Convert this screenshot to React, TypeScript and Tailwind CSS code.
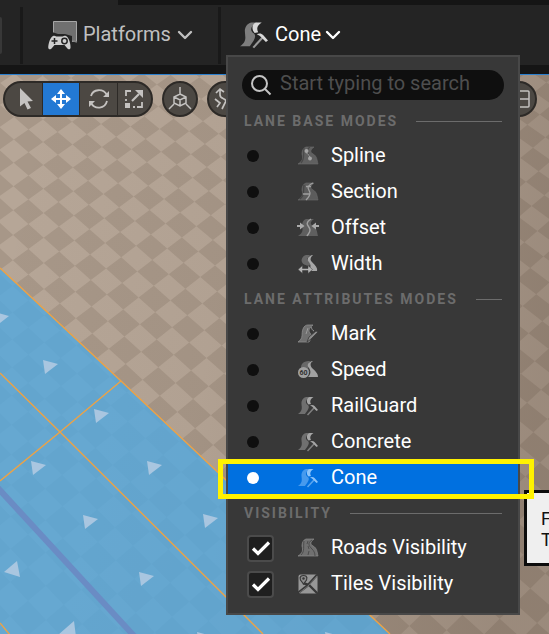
import type { ReactNode } from "react";

/* ---------- viewport scene ---------- */

// Perspective mapping of the ground grid (column, row) to scene coordinates.
function ground(col: number, row: number): string {
  const u = col / 6;
  const v = row / 11;
  const w = 1 - 0.0111 * u - 0.1201 * v;
  const x = (14 + 173.9 * u - 3.7 * v) / w;
  const y = (128.3 + 12.8 * u + 232.5 * v) / w;
  return `${x.toFixed(1)} ${(y - 75).toFixed(1)}`;
}

function tilePath(): string {
  const parts: string[] = [];
  for (let c = -1; c < 20; c++) {
    for (let r = -6; r < 19; r++) {
      parts.push(
        `M${ground(c - 0.5, r)}L${ground(c, r - 0.5)}L${ground(c + 0.5, r)}L${ground(c, r + 0.5)}Z`,
      );
    }
  }
  return parts.join("");
}

const arrows = [
  [-6, 312],
  [43, 360],
  [94, 409],
  [31, 461],
  [147, 461],
  [83, 515],
  [203, 514],
  [139, 572],
  [197, 632],
  [325, 632],
];

function Scene() {
  return (
    <svg
      className="absolute inset-0 h-full w-full"
      viewBox="0 0 549 559"
      preserveAspectRatio="xMinYMin slice"
      aria-hidden="true"
    >
      <defs>
        <linearGradient id="shade" x1="0" y1="0.3" x2="1" y2="0.5">
          <stop offset="0" stopColor="#3a281c" stopOpacity="0" />
          <stop offset="0.4" stopColor="#3a281c" stopOpacity="0.04" />
          <stop offset="1" stopColor="#3a281c" stopOpacity="0.22" />
        </linearGradient>
      </defs>
      <rect width="549" height="559" fill="#a79788" />
      <path d={tilePath()} fill="#b6a697" />
      <rect width="549" height="559" fill="url(#shade)" />
      <g transform="translate(0 -75)">
        <path d="M0 268L121 381L226 480L390 634H0Z" fill="#52a9e0" fillOpacity="0.8" />
        <path d="M-3 487L135 637" stroke="#6a8cc4" strokeWidth="6" />
        <g fill="none" stroke="#eda245" strokeWidth="1.4">
          <path d="M0 268L121 381L226 480L390 634" />
          <path d="M0 373L60 432L226 597L263 634" />
          <path d="M121 381L60 432L0 481" />
          <path d="M0 623L10 635" />
        </g>
        <g fill="#a9c6e0">
          {arrows.map(([x, y]) => (
            <path key={`${x}-${y}`} d={`M${x} ${y}l15 4l-13 10z`} />
          ))}
          <path d="M4 572L17 561L20 577Z" />
          <path d="M58 635L74 621L76 637Z" />
        </g>
      </g>
    </svg>
  );
}

/* ---------- icons ---------- */

function Chevron() {
  return (
    <svg width="16" height="10" viewBox="0 0 16 10" fill="none" stroke="currentColor" strokeWidth="2.4" strokeLinecap="round" strokeLinejoin="round" aria-hidden="true">
      <path d="M2 2L8 8L14 2" />
    </svg>
  );
}

function PlatformsIcon() {
  return (
    <svg width="30" height="30" viewBox="0 0 30 30" aria-hidden="true">
      <path d="M5.5 1.5H28.500V21.500H5.500Z" fill="#707070" stroke="#a6a6a6" />
      <path d="M4 12L10 14L17 14L24 16V24H30V30H0V24Z" fill="#242424" />
      <path d="M24 20.500L29 22" stroke="#808080" strokeWidth="1.500" />
      <path d="M5 16C7 15 8 16.500 9 16.500H14C15 16.500 16 15 18 16C21 17 23 25 22.500 28C22 30 20 29.500 19 28L16.500 25H6.500L4 28C3 29.500 .8 30 .3 28C0 25 2 17 5 16Z" fill="#cfcfcf" />
      <path d="M6.500 18V24M3.500 21H9.500" stroke="#242424" strokeWidth="1.500" />
      <circle cx="16.500" cy="21" r="2.700" fill="none" stroke="#242424" strokeWidth="1.500" />
    </svg>
  );
}

const wideRoad = "M0 18C5 15 5 12 4 8C4 5 5 2 8 1H16C12 4 12 6 15 8C19 10 19 14 20 18Z";
const bendRoad = "M0 18C6 14 3 10 5 5C6 2 8 1 10 1H15C11 4 10 7 12 9C14 12 13 15 11 18Z";

type RoadKind = "spline" | "section" | "offset" | "width" | "mark" | "speed" | "hammer" | "roads" | "tiles";

function HammerRoad() {
  return (
    <>
      <path d="M0 18C6 14 3 10 3.500 6C4.500 2 7 1 9 1H12C7 4 7 7 10 9C12 11 10 14 7 18Z" fill="currentColor" opacity="0.5" />
      <path d="M15.500 1C12.500 3 11.500 5 13 8L10.500 8.500C8 6 8.500 2 11.500 1Z" fill="currentColor" />
      <path d="M9.500 19L16 12" stroke="currentColor" strokeWidth="1.500" opacity="0.65" />
      <path d="M12 9.500C13.500 8.500 15.500 8.800 16.500 10L20 14L18.500 15L15.500 12L14 10.500Z" fill="currentColor" />
    </>
  );
}

const drawings: Record<RoadKind, ReactNode> = {
  spline: (
    <>
      <path d={wideRoad} fill="#606060" stroke="#6c6c6c" strokeWidth="0.600" />
      <path d="M6 2C5 10 7 13 3 17M12 1C7 4 11 10 14 14" fill="none" stroke="#494949" strokeWidth="1.200" />
      <path d="M8.500 5C8 9 12 8 12 12" fill="none" stroke="#a5a5a5" />
      <circle cx="8.500" cy="5" r="2" fill="#a5a5a5" />
      <circle cx="12" cy="12.500" r="2" fill="#a5a5a5" />
    </>
  ),
  section: (
    <>
      <path d={wideRoad} fill="#5c5c5c" stroke="#6c6c6c" strokeWidth="0.600" />
      <path d="M6 3C5 10 7 13 2 17" fill="none" stroke="#454545" strokeWidth="1.200" />
      <path d="M15 1C6 5 12 8 12 11C12 14 10 16 8 18M8 4.500H13M5 12H12" fill="none" stroke="#a0a0a0" strokeWidth="1.300" />
    </>
  ),
  offset: (
    <>
      <path d={wideRoad} fill="#5f5f5f" />
      <path d="M13 1C5 6 12 8 12 12C12 15 10 16 9 18" fill="none" stroke="#a0a0a0" strokeWidth="1.400" />
      <path d="M-1 7H2V4.500L6.500 8L2 11.500V9H-1ZM21 7H18V4.500L13.500 8L18 11.500V9H21Z" fill="#aaaaaa" />
    </>
  ),
  width: (
    <>
      <path d="M8 1C4 2 3 6 4 8C5 11 8 11 11 12L13 9L9 5L12 1Z" fill="#676767" />
      <path d="M14 1C9 3 9 6 11 8C13 11 13 13 11 16L14 17H19C20 14 17 11 14 8C12 6 12 4 15 1Z" fill="#a7a7a7" />
      <path d="M0 15.500L4.500 11.500V14.500H10V11.500L14.500 15.500L10 19.500V16.500H4.500V19.500Z" fill="#b4b4b4" stroke="#383838" strokeWidth="0.500" />
    </>
  ),
  mark: (
    <>
      <path d={bendRoad} fill="#707070" stroke="#8e8e8e" strokeWidth="0.800" />
      <path d="M13 3C14 5 14 6 16 7M10 4L8 10" stroke="#9a9a9a" fill="none" />
      <path d="M9 18L11 13L18 7L20 8L13 15Z" fill="#8b8b8b" stroke="#383838" strokeWidth="0.800" />
    </>
  ),
  speed: (
    <>
      <path d="M10 1C4 2 3 5 3 8L9 9L12 13L10 8L12 1Z" fill="#686868" />
      <path d="M14 1C9 3 9 6 11 8C13 11 13 14 10 17H20C20 13 17 11 14 8C12 5 12 3 15 1Z" fill="#a2a2a2" />
      <circle cx="5.500" cy="12.500" r="5.500" fill="#a0a0a0" />
      <text x="5.500" y="15" textAnchor="middle" fontSize="7" fontWeight="700" fontFamily="Roboto, sans-serif" fill="#303030">60</text>
    </>
  ),
  hammer: <HammerRoad />,
  roads: (
    <>
      <path d={wideRoad} fill="#707070" stroke="#8a8a8a" strokeWidth="0.700" />
      <path d="M6 3C5 9 7 13 3 17M14 2C9 5 11 8 14 11C16 13 17 15 17 18" fill="none" stroke="#484848" strokeWidth="0.900" />
      <path d="M10 3L9 6M10 8L11 11M11 13L10 17" stroke="#484848" strokeWidth="0.900" />
    </>
  ),
  tiles: (
    <>
      <rect x="0.500" y="0.500" width="19" height="19" rx="2" fill="#979797" />
      <path d="M0 19L9 12L19 1M5 9L11 11L19 19" fill="none" stroke="#383838" strokeWidth="2.400" />
      <path d="M1 19L10 12L19 2" fill="none" stroke="#979797" strokeWidth="0.600" />
      <path d="M5.500 10L2.500 6C1 2 4 1.500 5.500 1.500C7 1.500 10 2 8.500 6Z" fill="#8c8c8c" stroke="#383838" strokeWidth="1.200" />
      <circle cx="5.500" cy="4.500" r="1.200" fill="#383838" />
    </>
  ),
};

function RoadIcon({ kind, className }: { kind: RoadKind; className: string }) {
  return (
    <svg className={`shrink-0 overflow-visible ${className}`} viewBox="0 0 20 20" aria-hidden="true">
      {drawings[kind]}
    </svg>
  );
}

/* ---------- menu ---------- */

function SectionTitle({ children }: { children: string }) {
  return (
    <div className="flex h-[34px] items-center gap-[18px] px-4">
      <h2 className="text-sm font-bold tracking-[2px] whitespace-nowrap text-[#6c6c6c]">{children}</h2>
      <span className="h-px flex-1 bg-[#6c6c6c]" />
    </div>
  );
}

function ModeItem({ label, kind, selected = false }: { label: string; kind: RoadKind; selected?: boolean }) {
  return (
    <label
      className={`flex h-9 items-center pl-[19px] text-xl ${selected ? "bg-[#0070e0] text-[#8dc4fa]" : "text-[#a6a6a6]"}`}
    >
      <span className="flex w-[51px] items-center">
        <input
          type="radio"
          name="mode"
          defaultChecked={selected}
          className="h-3 w-3 appearance-none rounded-full bg-[#0f0f0f] checked:bg-white"
        />
      </span>
      <RoadIcon kind={kind} className="h-5 w-5" />
      <span className="pb-0.5 pl-[13px] text-white">{label}</span>
    </label>
  );
}

function VisibilityItem({ label, kind }: { label: string; kind: RoadKind }) {
  return (
    <label className="flex h-9 items-center pl-[19px] text-xl text-white">
      <span className="grid w-[51px] items-center">
        <input
          type="checkbox"
          defaultChecked
          className="col-start-1 row-start-1 h-[27px] w-[27px] appearance-none rounded border-2 border-[#4b4b4b] bg-[#1f1f1f]"
        />
        <svg className="pointer-events-none col-start-1 row-start-1 ml-1" width="20" height="20" viewBox="0 0 20 20" fill="none" stroke="#ffffff" strokeWidth="3.200" aria-hidden="true">
          <path d="M2 10.500L7 15.500L18 4.500" />
        </svg>
      </span>
      <RoadIcon kind={kind} className="h-5 w-5" />
      <span className="pb-0.5 pl-[13px]">{label}</span>
    </label>
  );
}

function ModeMenu() {
  return (
    <div className="absolute top-[55px] left-[226px] w-[294px] border-2 border-[#484848] bg-[#383838] pb-[11px]">
      <div className="mx-[14px] mt-[13px] mb-1 flex h-[30px] items-center rounded-full bg-[#0f0f0f] pl-2">
        <svg className="shrink-0" width="22" height="22" viewBox="0 0 22 22" fill="none" stroke="#c4c4c4" strokeWidth="2" aria-hidden="true">
          <circle cx="9.500" cy="9.500" r="7.500" />
          <path d="M15 15L20.500 20.500" />
        </svg>
        <input
          type="text"
          aria-label="Search modes"
          placeholder="Start typing to search"
          className="ml-2 h-[26px] w-full min-w-0 bg-transparent pb-1 text-xl text-white outline-none placeholder:text-[#4e4e4e]"
        />
      </div>
      <SectionTitle>LANE BASE MODES</SectionTitle>
      <ModeItem label="Spline" kind="spline" />
      <ModeItem label="Section" kind="section" />
      <ModeItem label="Offset" kind="offset" />
      <ModeItem label="Width" kind="width" />
      <SectionTitle>LANE ATTRIBUTES MODES</SectionTitle>
      <ModeItem label="Mark" kind="mark" />
      <ModeItem label="Speed" kind="speed" />
      <ModeItem label="RailGuard" kind="hammer" />
      <ModeItem label="Concrete" kind="hammer" />
      <ModeItem label="Cone" kind="hammer" selected />
      <SectionTitle>VISIBILITY</SectionTitle>
      <VisibilityItem label="Roads Visibility" kind="roads" />
      <VisibilityItem label="Tiles Visibility" kind="tiles" />
    </div>
  );
}

/* ---------- viewport tools ---------- */

const pill = "flex h-9 shrink-0 overflow-hidden border-2 border-[#2d2a27] bg-[#4c4843] text-[#c4c2c0]";

function ViewportTools() {
  return (
    <div className="relative flex gap-[9px] pt-[6px] pr-3 pl-[3px]">
      <div className={`${pill} w-[150px] divide-x divide-[#2d2a27] rounded-full`}>
        <button type="button" aria-label="Select" className="flex w-[38px] items-center justify-end pr-2">
          <svg width="15" height="22" viewBox="0 0 15 22" fill="currentColor">
            <path d="M1 0L14 13L8.500 13.500L12 20L8.500 21.500L5.500 15L1 18.500Z" />
          </svg>
        </button>
        <button type="button" aria-label="Move" className="flex w-[37px] items-center justify-center bg-[#2379d4] text-white">
          <svg width="20" height="20" viewBox="0 0 20 20" fill="currentColor">
            <path d="M10 0L14 5H11V9H15V6L20 10L15 14V11H11V15H14L10 20L6 15H9V11H5V14L0 10L5 6V9H9V5H6Z" />
          </svg>
        </button>
        <button type="button" aria-label="Rotate" className="flex w-[38px] items-center justify-center">
          <svg width="22" height="20" viewBox="0 0 22 20" fill="none" stroke="currentColor" strokeWidth="1.800">
            <path d="M3 7C5 0 15 -1 19 6M19 12C17 20 7 21 3 14" />
            <path d="M21 2V8H15ZM1 18V12H7Z" fill="currentColor" stroke="none" />
          </svg>
        </button>
        <button type="button" aria-label="Scale" className="flex flex-1 items-center justify-center pr-0.5">
          <svg width="18" height="18" viewBox="0 0 18 18" fill="none" stroke="currentColor" strokeWidth="1.800">
            <path d="M1 6V1H6M17 12V17H12M1 9V11M8 17H10" />
            <path d="M7 11L14 4" strokeWidth="2.200" />
            <path d="M10 0H18V8ZM0 13H5V18H0Z" fill="currentColor" stroke="none" />
          </svg>
        </button>
      </div>
      <button type="button" aria-label="Coordinate system" className={`${pill} w-9 items-center justify-center rounded-full`}>
        <svg className="shrink-0" width="24" height="26" viewBox="0 0 24 26" fill="none" stroke="currentColor" strokeWidth="1.500">
          <path d="M12 1V8M12 8L18 11V17L12 20L6 17V11ZM6 11L12 14L18 11M12 14V20M6 18L1 23M18 18L23 23" />
        </svg>
      </button>
      <button type="button" aria-label="Surface snapping" className={`${pill} w-[60px] items-center rounded-full pl-[5px]`}>
        <svg width="24" height="24" viewBox="0 0 24 24" fill="none" stroke="currentColor" strokeWidth="1.700">
          <path d="M6 2V8C6 12 11 11 12 14L8 22M2 6L6 2L10 5M12 14C14 14 15 11 20 9M1 12L6 16L3 20" />
        </svg>
      </button>
      <button type="button" aria-label="Layout" className={`${pill} ml-auto w-[60px] items-center justify-end rounded-full pr-[5px]`}>
        <svg width="18" height="18" viewBox="0 0 18 18" fill="none" stroke="currentColor" strokeWidth="1.500">
          <rect x="1" y="1" width="16" height="16" rx="1" />
          <path d="M1 9H17" />
        </svg>
      </button>
    </div>
  );
}

export default function App() {
  return (
    <div className="relative flex min-h-screen flex-col overflow-hidden bg-[#151515] font-['Roboto',sans-serif]">
      <div className="flex h-[5px]">
        <div className="w-[118px] bg-[#242424]" />
      </div>
      <header className="flex h-[60px] items-center bg-[#242424] text-xl">
        <div className="h-[37px] w-[2px] rounded-r bg-[#383838]" />
        <div className="ml-[18px] h-[57px] w-[3px] bg-[#191919]" />
        <button type="button" className="flex w-[195px] items-center pl-[25px] text-[#c0c0c0]">
          <PlatformsIcon />
          <span className="pr-[6px] pb-0.5 pl-[5px]">Platforms</span>
          <Chevron />
        </button>
        <div className="h-[57px] w-[3px] bg-[#191919]" />
        <button type="button" className="flex items-center pl-[19px] text-white">
          <span className="text-[#d8d8d8]">
            <RoadIcon kind="hammer" className="h-[28px] w-[28px]" />
          </span>
          <span className="pr-1 pb-0.5 pl-[7px]">Cone</span>
          <Chevron />
        </button>
      </header>
      <main className="relative mt-[9px] flex-1 overflow-hidden border-t border-[#2a7fce]">
        <Scene />
        <ViewportTools />
      </main>
      <ModeMenu />
      <div className="absolute top-[490px] left-[524px] h-[76px] w-[200px] border-3 border-[#0c0c0c] bg-[#efefef] pt-[15px] pl-[14px] text-lg leading-[21px] text-[#111111]" role="tooltip">
        <p>F</p>
        <p>T</p>
      </div>
      <div className="pointer-events-none absolute top-[459px] left-[218px] h-10 w-[316px] border-5 border-[#fff200]" />
    </div>
  );
}
